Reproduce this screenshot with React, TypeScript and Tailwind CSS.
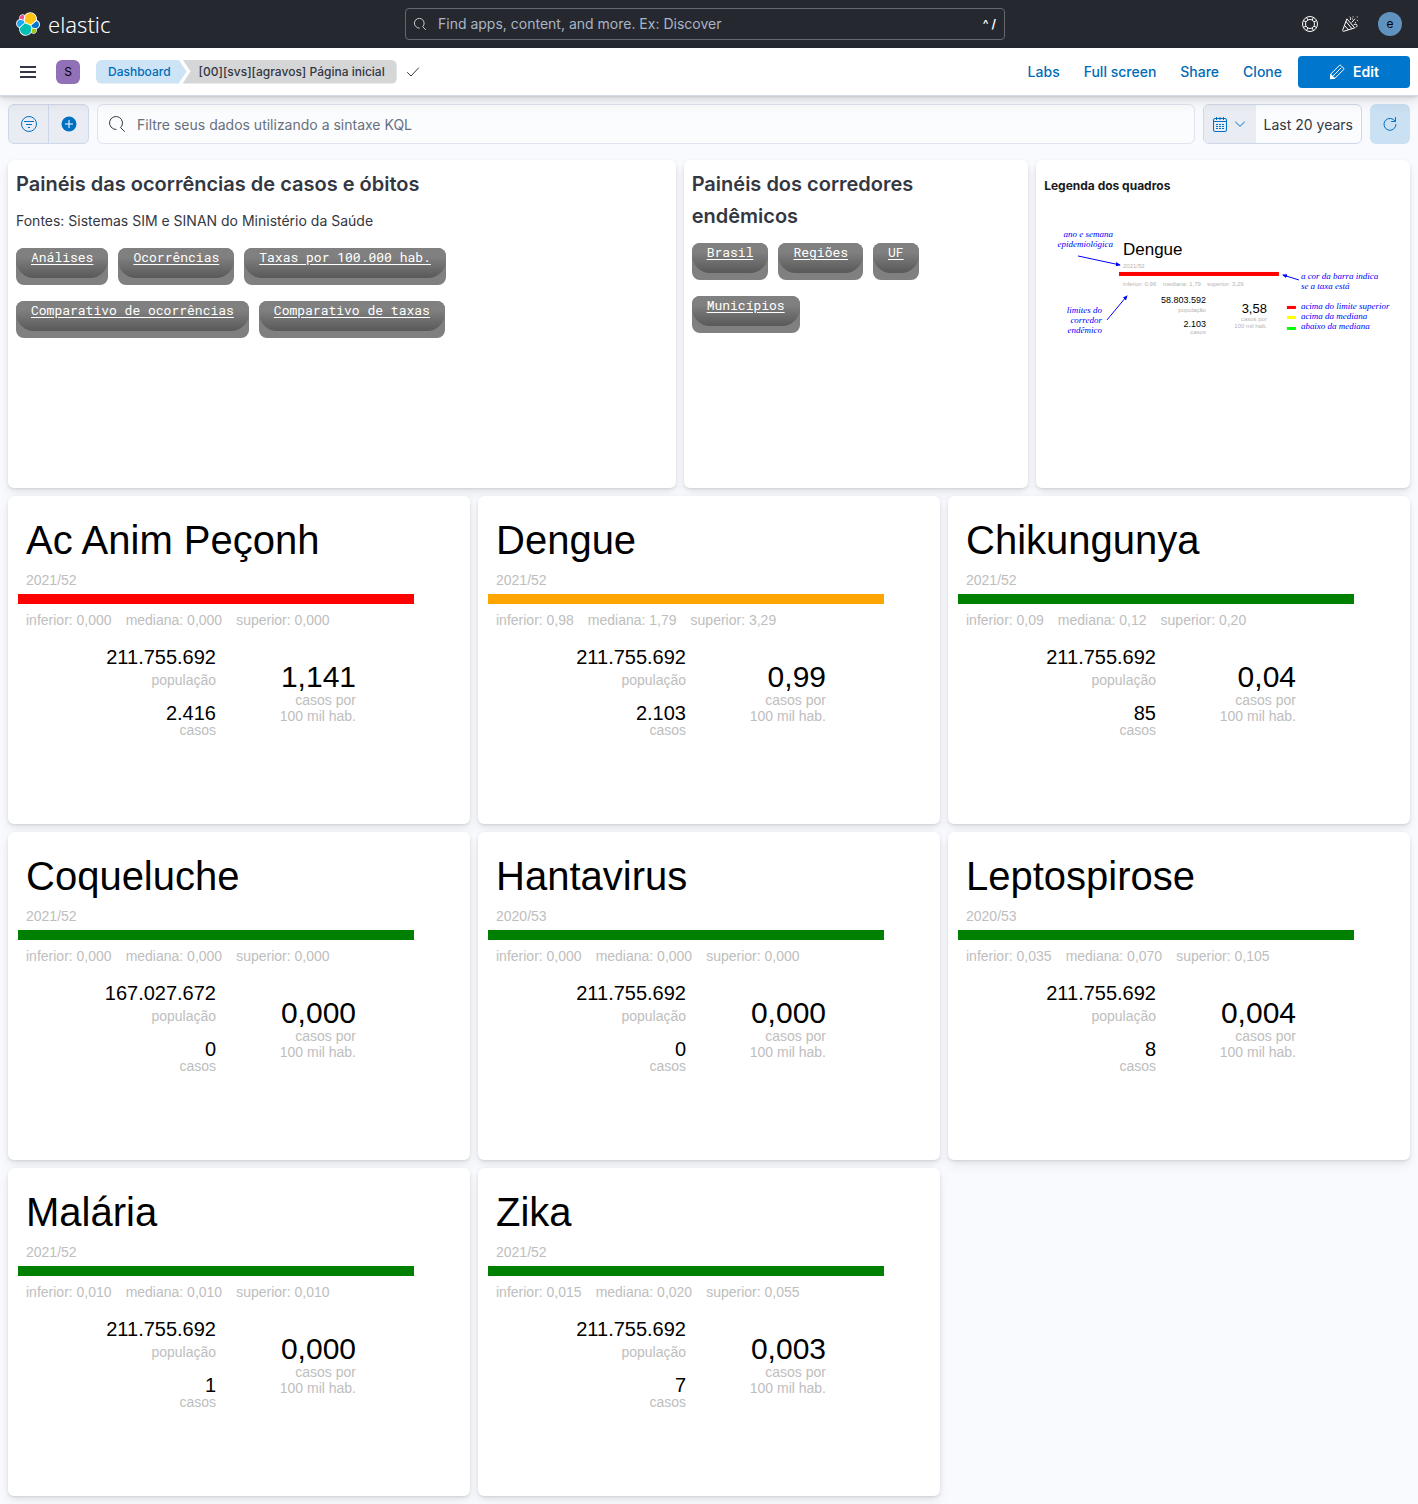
import React from "react";

const stroke = { fill: "none", stroke: "currentColor" } as const;

function SearchIcon({ size = 16 }: { size?: number }) {
  return (
    <svg width={size} height={size} viewBox="0 0 16 16" aria-hidden="true" {...stroke} strokeLinecap="round">
      <path d="M7 13.5A6.5 6.5 0 1 1 11.6 11.6L15.5 15.5" />
    </svg>
  );
}

function ElasticLogo() {
  return (
    <svg width="24" height="24" viewBox="0 0 32 32" aria-hidden="true">
      <path fill="#FFF" d="M32 16.77c0-2.692-1.672-5.044-4.184-5.957a9.044 9.044 0 0 0 .164-1.687c0-4.92-3.984-8.92-8.884-8.92-2.871 0-5.555 1.384-7.227 3.729a4.703 4.703 0 0 0-2.89-.988 4.73 4.73 0 0 0-4.456 6.326C1.893 10.171.15 12.57.15 15.23c0 2.7 1.68 5.067 4.2 5.979a9.2 9.2 0 0 0-.163 1.687c0 4.907 3.983 8.902 8.875 8.902a8.86 8.86 0 0 0 7.219-3.738 4.7 4.7 0 0 0 2.899.997 4.73 4.73 0 0 0 4.456-6.326C30.25 21.82 32 19.43 32 16.77" />
      <path fill="#FEC514" d="M12.58 13.787l7.002 3.211 7.066-6.213a7.849 7.849 0 0 0 .152-1.557c0-4.287-3.468-7.774-7.731-7.774-2.557 0-4.933 1.273-6.385 3.387l-1.175 6.129 1.071 2.817z" />
      <path fill="#00BFB3" d="M5.333 21.214a7.9 7.9 0 0 0-.15 1.575c0 4.302 3.494 7.801 7.789 7.801a7.81 7.81 0 0 0 6.442-3.413l1.166-6.11-1.557-2.992-7.029-3.22-6.661 6.359z" />
      <path fill="#F04E98" d="M5.288 9.067l4.798 1.139L11.138 4.717a3.785 3.785 0 0 0-6.082 3.03c0 .452.08.898.232 1.32z" />
      <path fill="#1BA9F5" d="M4.872 10.214c-2.145.714-3.586 2.767-3.586 5.034a5.299 5.299 0 0 0 3.372 4.939l6.731-6.119-1.236-2.657-5.281-1.197z" />
      <path fill="#93C90E" d="M20.873 27.177a3.773 3.773 0 0 0 2.287.787 3.784 3.784 0 0 0 3.79-3.789c0-.46-.081-.91-.235-1.322l-4.792-1.126-1.05 5.45z" />
      <path fill="#07C" d="M21.848 20.563l5.28 1.236c2.146-.714 3.588-2.767 3.588-5.034a5.284 5.284 0 0 0-3.382-4.925l-6.904 6.078 1.418 2.645z" />
    </svg>
  );
}

function HelpIcon() {
  return (
    <svg width="16" height="16" viewBox="0 0 16 16" aria-hidden="true" {...stroke}>
      <circle cx="8" cy="8" r="7.5" />
      <circle cx="8" cy="8" r="4.5" />
      <path d="M4.6 1.4 5.8 4M11.4 1.4 10.2 4M4.6 14.6 5.8 12M11.4 14.6 10.2 12M1.4 4.6 4 5.8M1.4 11.4 4 10.2M14.6 4.6 12 5.8M14.6 11.4 12 10.2" />
    </svg>
  );
}

function CheerIcon() {
  return (
    <svg width="16" height="16" viewBox="0 0 16 16" aria-hidden="true" {...stroke} strokeLinecap="round" strokeLinejoin="round">
      <path d="M4.8 3.2.6 14.3c-.2.7.3 1.2 1 1L12.3 12zM4.1 5.600l5.800 7M2.600 9.600l3.800 4.200" />
      <path d="M8 1c.8.6.9 1.500.5 2.500M10 6.200l2.800-3.200M12 8.500c1.500-.8 2.900-.4 3 1 .1.900-.4 1.400-1 1.800" />
      <path d="M11 .8h.1M15.2 1h.1M15.3 4.5h.1M13.5 6.5h.1M10.4 3h.1" />
    </svg>
  );
}

function PencilIcon() {
  return (
    <svg width="16" height="16" viewBox="0 0 16 16" aria-hidden="true" {...stroke} strokeLinejoin="round">
      <path d="M1.8 10 10.3 1.5a1.2 1.2 0 0 1 1.7 0L14.5 4a1.2 1.2 0 0 1 0 1.7L6 14.2l-4.500.5zM3.900 12.100 12.400 3.600" />
      <path d="M1.5 14.700l.3-4.200 3.900 3.900z" fill="currentColor" />
    </svg>
  );
}

function FilterIcon() {
  return (
    <svg width="16" height="16" viewBox="0 0 16 16" aria-hidden="true" {...stroke}>
      <circle cx="8" cy="8" r="7.5" />
      <path d="M3 5.5h10M5 8.5h6M7 11.5h2" />
    </svg>
  );
}

function PlusCircleIcon() {
  return (
    <svg width="16" height="16" viewBox="0 0 16 16" aria-hidden="true">
      <circle cx="8" cy="8" r="7.5" fill="currentColor" />
      <path d="M8 4v8M4 8h8" stroke="#fff" />
    </svg>
  );
}

function CalendarIcon() {
  return (
    <svg width="16" height="16" viewBox="0 0 16 16" aria-hidden="true" {...stroke}>
      <rect x="1.5" y="2.5" width="13" height="13" rx="1.5" />
      <path d="M1.5 5.500h13M4.500 1v3M8 1v3M11.500 1v3" />
      <path d="M4 8.500h8M4 10.500h8M4 12.500h8" strokeDasharray="2 1" />
    </svg>
  );
}

function ChevronIcon() {
  return (
    <svg width="12" height="12" viewBox="0 0 12 12" aria-hidden="true" {...stroke} strokeLinecap="round" strokeLinejoin="round">
      <path d="M1.5 4 6 8.300 10.500 4" />
    </svg>
  );
}

function RefreshIcon() {
  return (
    <svg width="16" height="16" viewBox="0 0 16 16" aria-hidden="true" {...stroke} strokeLinecap="round">
      <path d="M13 5A6 6 0 1 0 14 8.500M13.500 1.500v4h-4" />
    </svg>
  );
}

const pillLinks = {
  ocorrencias: ["Análises", "Ocorrências", "Taxas por 100.000 hab.", "Comparativo de ocorrências", "Comparativo de taxas"],
  corredores: ["Brasil", "Regiões", "UF", "Municípios"],
};

function PillLink({ label }: { label: string }) {
  return (
    <a
      href="#"
      className="block h-[37px] rounded-lg bg-[#808080] font-['Roboto_Mono','Noto_Sans_Mono','DejaVu_Sans_Mono',monospace] text-[13px] leading-[18px] text-white underline underline-offset-2"
    >
      <span className="block h-[30px] rounded-t-lg rounded-b-[18px] bg-linear-to-b from-[#808080] from-30% to-[#595959] px-[15px]">
        {label}
      </span>
    </a>
  );
}

function Panel({ className, children }: { className: string; children: React.ReactNode }) {
  return (
    <section
      className={
        "overflow-hidden rounded-md bg-white shadow-[0_1px_2px_rgba(0,0,0,0.08),0_2px_5px_rgba(0,0,0,0.06),0_6px_12px_rgba(0,0,0,0.06)] " +
        className
      }
    >
      {children}
    </section>
  );
}

type Disease = {
  name: string;
  week: string;
  color: string;
  limits: [string, string, string];
  population: string;
  cases: string;
  rate: string;
};

const RED = "bg-[#ff0000]";
const ORANGE = "bg-[#ffa500]";
const GREEN = "bg-[#008000]";

const diseases: Disease[] = [
  { name: "Ac Anim Peçonh", week: "2021/52", color: RED, limits: ["0,000", "0,000", "0,000"], population: "211.755.692", cases: "2.416", rate: "1,141" },
  { name: "Dengue", week: "2021/52", color: ORANGE, limits: ["0,98", "1,79", "3,29"], population: "211.755.692", cases: "2.103", rate: "0,99" },
  { name: "Chikungunya", week: "2021/52", color: GREEN, limits: ["0,09", "0,12", "0,20"], population: "211.755.692", cases: "85", rate: "0,04" },
  { name: "Coqueluche", week: "2021/52", color: GREEN, limits: ["0,000", "0,000", "0,000"], population: "167.027.672", cases: "0", rate: "0,000" },
  { name: "Hantavirus", week: "2020/53", color: GREEN, limits: ["0,000", "0,000", "0,000"], population: "211.755.692", cases: "0", rate: "0,000" },
  { name: "Leptospirose", week: "2020/53", color: GREEN, limits: ["0,035", "0,070", "0,105"], population: "211.755.692", cases: "8", rate: "0,004" },
  { name: "Malária", week: "2021/52", color: GREEN, limits: ["0,010", "0,010", "0,010"], population: "211.755.692", cases: "1", rate: "0,000" },
  { name: "Zika", week: "2021/52", color: GREEN, limits: ["0,015", "0,020", "0,055"], population: "211.755.692", cases: "7", rate: "0,003" },
];

function DiseaseCard({ d }: { d: Disease }) {
  return (
    <Panel className="col-span-16 px-2.5 pt-5 font-['Liberation_Sans',Arial,sans-serif] text-sm/4 text-[#bebebe]">
      <h2 className="px-2 text-[40px]/12 text-black">{d.name}</h2>
      <p className="mt-2 px-2">{d.week}</p>
      <div className={"mt-1.5 h-2.5 w-[396px] max-w-full " + d.color} />
      <p className="mt-2 flex gap-3.5 px-2">
        <span>inferior: {d.limits[0]}</span>
        <span>mediana: {d.limits[1]}</span>
        <span>superior: {d.limits[2]}</span>
      </p>
      <div className="mt-5 flex text-right">
        <div className="w-[198px]">
          <p className="text-xl/[18px] text-black">{d.population}</p>
          <p className="mt-1.5">população</p>
          <p className="mt-4 text-xl/[18px] text-black">{d.cases}</p>
          <p>casos</p>
        </div>
        <div className="w-[140px] pt-4">
          <p className="text-3xl/[26px] text-black">{d.rate}</p>
          <p className="mt-0.5">
            casos por
            <br />
            100 mil hab.
          </p>
        </div>
      </div>
    </Panel>
  );
}

function LegendDrawing() {
  return (
    <svg viewBox="0 0 358 140" className="mt-2 w-full" role="img" aria-label="Legenda dos quadros">
      <defs>
        <marker id="arrow" viewBox="0 0 6 6" refX="5" refY="3" markerWidth="5" markerHeight="5" orient="auto">
          <path d="M0 .5 6 3 0 5.500z" fill="#00f" />
        </marker>
      </defs>
      <g fontFamily="'Liberation Sans', Arial, sans-serif" fill="#000">
        <text x="79" y="51" fontSize="17">Dengue</text>
        <text x="162" y="99" fontSize="9" textAnchor="end">58.803.592</text>
        <text x="162" y="123" fontSize="9" textAnchor="end">2.103</text>
        <text x="223" y="109" fontSize="13" textAnchor="end">3,58</text>
        <g fontSize="6" fill="#b4b4b4">
          <text x="79" y="64">2021/52</text>
          <text x="79" y="82">inferior: 0,96</text>
          <text x="119" y="82">mediana: 1,79</text>
          <text x="163" y="82">superior: 3,29</text>
          <text x="162" y="108" textAnchor="end">população</text>
          <text x="162" y="130" textAnchor="end">casos</text>
          <text x="223" y="117" textAnchor="end">casos por</text>
          <text x="223" y="124" textAnchor="end">100 mil hab.</text>
        </g>
      </g>
      <rect x="75" y="68" width="160" height="4" fill="#f00" />
      <rect x="243" y="102" width="9" height="3" fill="#f00" />
      <rect x="243" y="112" width="9" height="3" fill="#ff0" />
      <rect x="243" y="123" width="9" height="3" fill="#0f0" />
      <g stroke="#00f" strokeWidth="1">
        <path d="M34 52 76 61" markerEnd="url(#arrow)" />
        <path d="M63 116 83 92" markerEnd="url(#arrow)" />
        <path d="M255 76 239 71" markerEnd="url(#arrow)" />
      </g>
      <g fontFamily="'Z003', 'URW Chancery L', 'Liberation Serif', serif" fontStyle="italic" fontSize="9" fill="#00f">
        <text x="69" y="33" textAnchor="end">ano e semana</text>
        <text x="69" y="43" textAnchor="end">epidemiológica</text>
        <text x="58" y="109" textAnchor="end">limites do</text>
        <text x="58" y="119" textAnchor="end">corredor</text>
        <text x="58" y="129" textAnchor="end">endêmico</text>
        <text x="257" y="75">a cor da barra indica</text>
        <text x="257" y="85">se a taxa está</text>
        <text x="257" y="105">acima do limite superior</text>
        <text x="257" y="115">acima da mediana</text>
        <text x="257" y="125">abaixo da mediana</text>
      </g>
    </svg>
  );
}

function TopBar() {
  return (
    <header className="flex h-12 items-center justify-between bg-[#25282f] pr-6 pl-4 text-white">
      <a href="#" className="flex flex-1 items-center gap-2">
        <ElasticLogo />
        <span className="font-['Noto_Sans','Open_Sans',sans-serif] text-[22px]/6 font-light">elastic</span>
      </a>
      <label className="flex h-8 w-[600px] items-center gap-3 rounded border border-[#65686e] px-2">
        <SearchIcon size={12} />
        <input
          type="text"
          aria-label="Find apps, content, and more"
          placeholder="Find apps, content, and more. Ex: Discover"
          className="min-w-0 flex-1 bg-transparent text-sm outline-none placeholder:text-[#abb4c4]"
        />
        <span className="text-xs font-semibold">^ /</span>
      </label>
      <div className="flex flex-1 items-center justify-end gap-6">
        <button type="button" aria-label="Help"><HelpIcon /></button>
        <button type="button" aria-label="News"><CheerIcon /></button>
        <button type="button" aria-label="Account" className="-mr-2 -ml-1 size-6 rounded-full bg-[#6092c0] text-xs text-black">e</button>
      </div>
    </header>
  );
}

function NavBar() {
  return (
    <nav className="relative flex h-12 items-center border-b border-[#d3dae6] bg-white pr-2 pl-5 text-xs font-medium shadow-[0_1px_2px_rgba(0,0,0,0.1),0_3px_6px_rgba(0,0,0,0.08),0_6px_14px_rgba(0,0,0,0.08)]">
      <button type="button" aria-label="Menu" className="text-[#343741]">
        <svg width="16" height="16" viewBox="0 0 16 16" aria-hidden="true">
          <path d="M0 3h16M0 8h16M0 13h16" stroke="currentColor" strokeWidth="2" />
        </svg>
      </button>
      <button type="button" aria-label="Space" className="ml-5 size-6 rounded-md bg-[#9170b8] font-normal text-black">S</button>
      <ol className="ml-4 flex leading-6">
        <li>
          <a href="#" className="block rounded-l-md bg-[#cce4f5] pr-4 pl-3 text-[#006bb8] [clip-path:polygon(0_0,calc(100%-8px)_0,100%_50%,calc(100%-8px)_100%,0_100%)]">
            Dashboard
          </a>
        </li>
        <li className="-ml-1 rounded-r-md bg-[#d5d6d8] pr-3 pl-4 text-[#343741] [clip-path:polygon(0_0,100%_0,100%_100%,0_100%,8px_50%)]">
          [00][svs][agravos] Página inicial
        </li>
      </ol>
      <svg className="ml-2 text-[#343741]" width="16" height="16" viewBox="0 0 16 16" aria-hidden="true" {...stroke} strokeLinecap="round" strokeLinejoin="round">
        <path d="M2.5 8.500 6 12l7.500-8" />
      </svg>
      <div className="ml-auto flex items-center gap-6 text-sm text-[#006bb8]">
        <a href="#">Labs</a>
        <a href="#">Full screen</a>
        <a href="#">Share</a>
        <a href="#">Clone</a>
        <button type="button" className="-ml-2 flex h-8 w-28 items-center justify-center gap-2 rounded bg-[#0077cc] font-semibold text-white">
          <PencilIcon />
          Edit
        </button>
      </div>
    </nav>
  );
}

function QueryBar() {
  return (
    <div className="flex h-10 gap-2 text-sm">
      <div className="flex w-[81px] overflow-hidden rounded-md border border-[#cfd7ea] bg-[#e9edf3] text-[#0071c2]">
        <button type="button" aria-label="Filtros" className="flex flex-1 items-center justify-center border-r border-[#cfd7ea]"><FilterIcon /></button>
        <button type="button" aria-label="Adicionar filtro" className="flex flex-1 items-center justify-center"><PlusCircleIcon /></button>
      </div>
      <label className="flex min-w-0 flex-1 items-center gap-3 rounded-md border border-[#e0e4ef] bg-[#fbfcfd] px-[11px] text-[#343741]">
        <SearchIcon />
        <input
          type="text"
          aria-label="Consulta KQL"
          placeholder="Filtre seus dados utilizando a sintaxe KQL"
          className="min-w-0 flex-1 bg-transparent pt-0.5 outline-none placeholder:text-[#69707d]"
        />
      </label>
      <div className="flex overflow-hidden rounded-md border border-[#cfd7ea] bg-[#fbfcfd]">
        <button type="button" aria-label="Período" className="flex items-center gap-1.5 bg-[#e9edf3] pr-2.5 pl-2 text-[#0071c2]">
          <CalendarIcon />
          <ChevronIcon />
        </button>
        <button type="button" className="px-2 pt-0.5 text-[#343741]">Last 20 years</button>
      </div>
      <button type="button" aria-label="Atualizar" className="flex w-10 items-center justify-center rounded-md bg-[#c9e1f3] text-[#0071c2]">
        <RefreshIcon />
      </button>
    </div>
  );
}

export default function App() {
  return (
    <div className="min-h-screen bg-[#f9fafe] font-['Inter',sans-serif] text-[#343741]">
      <TopBar />
      <NavBar />
      <main className="p-2">
        <QueryBar />
        <div className="mt-4 grid auto-rows-[328px] grid-cols-[repeat(48,minmax(0,1fr))] gap-2">
          <Panel className="col-span-23 px-2 pt-2">
            <h1 className="text-xl/8 font-semibold">Painéis das ocorrências de casos e óbitos</h1>
            <p className="mt-[9px] text-sm/6">Fontes: Sistemas SIM e SINAN do Ministério da Saúde</p>
            <div className="mt-[15px] flex max-w-[480px] flex-wrap gap-x-2.5 gap-y-4">
              {pillLinks.ocorrencias.map((label) => <PillLink key={label} label={label} />)}
            </div>
          </Panel>
          <Panel className="col-span-12 px-2 pt-2">
            <h1 className="max-w-64 text-xl/8 font-semibold">Painéis dos corredores endêmicos</h1>
            <div className="mt-[11px] flex max-w-64 flex-wrap gap-x-2.5 gap-y-4">
              {pillLinks.corredores.map((label) => <PillLink key={label} label={label} />)}
            </div>
          </Panel>
          <Panel className="col-span-13 px-2 pt-4">
            <h2 className="text-xs/5 font-bold text-[#1a1c21]">Legenda dos quadros</h2>
            <LegendDrawing />
          </Panel>
          {diseases.map((d) => <DiseaseCard key={d.name} d={d} />)}
        </div>
      </main>
    </div>
  );
}
